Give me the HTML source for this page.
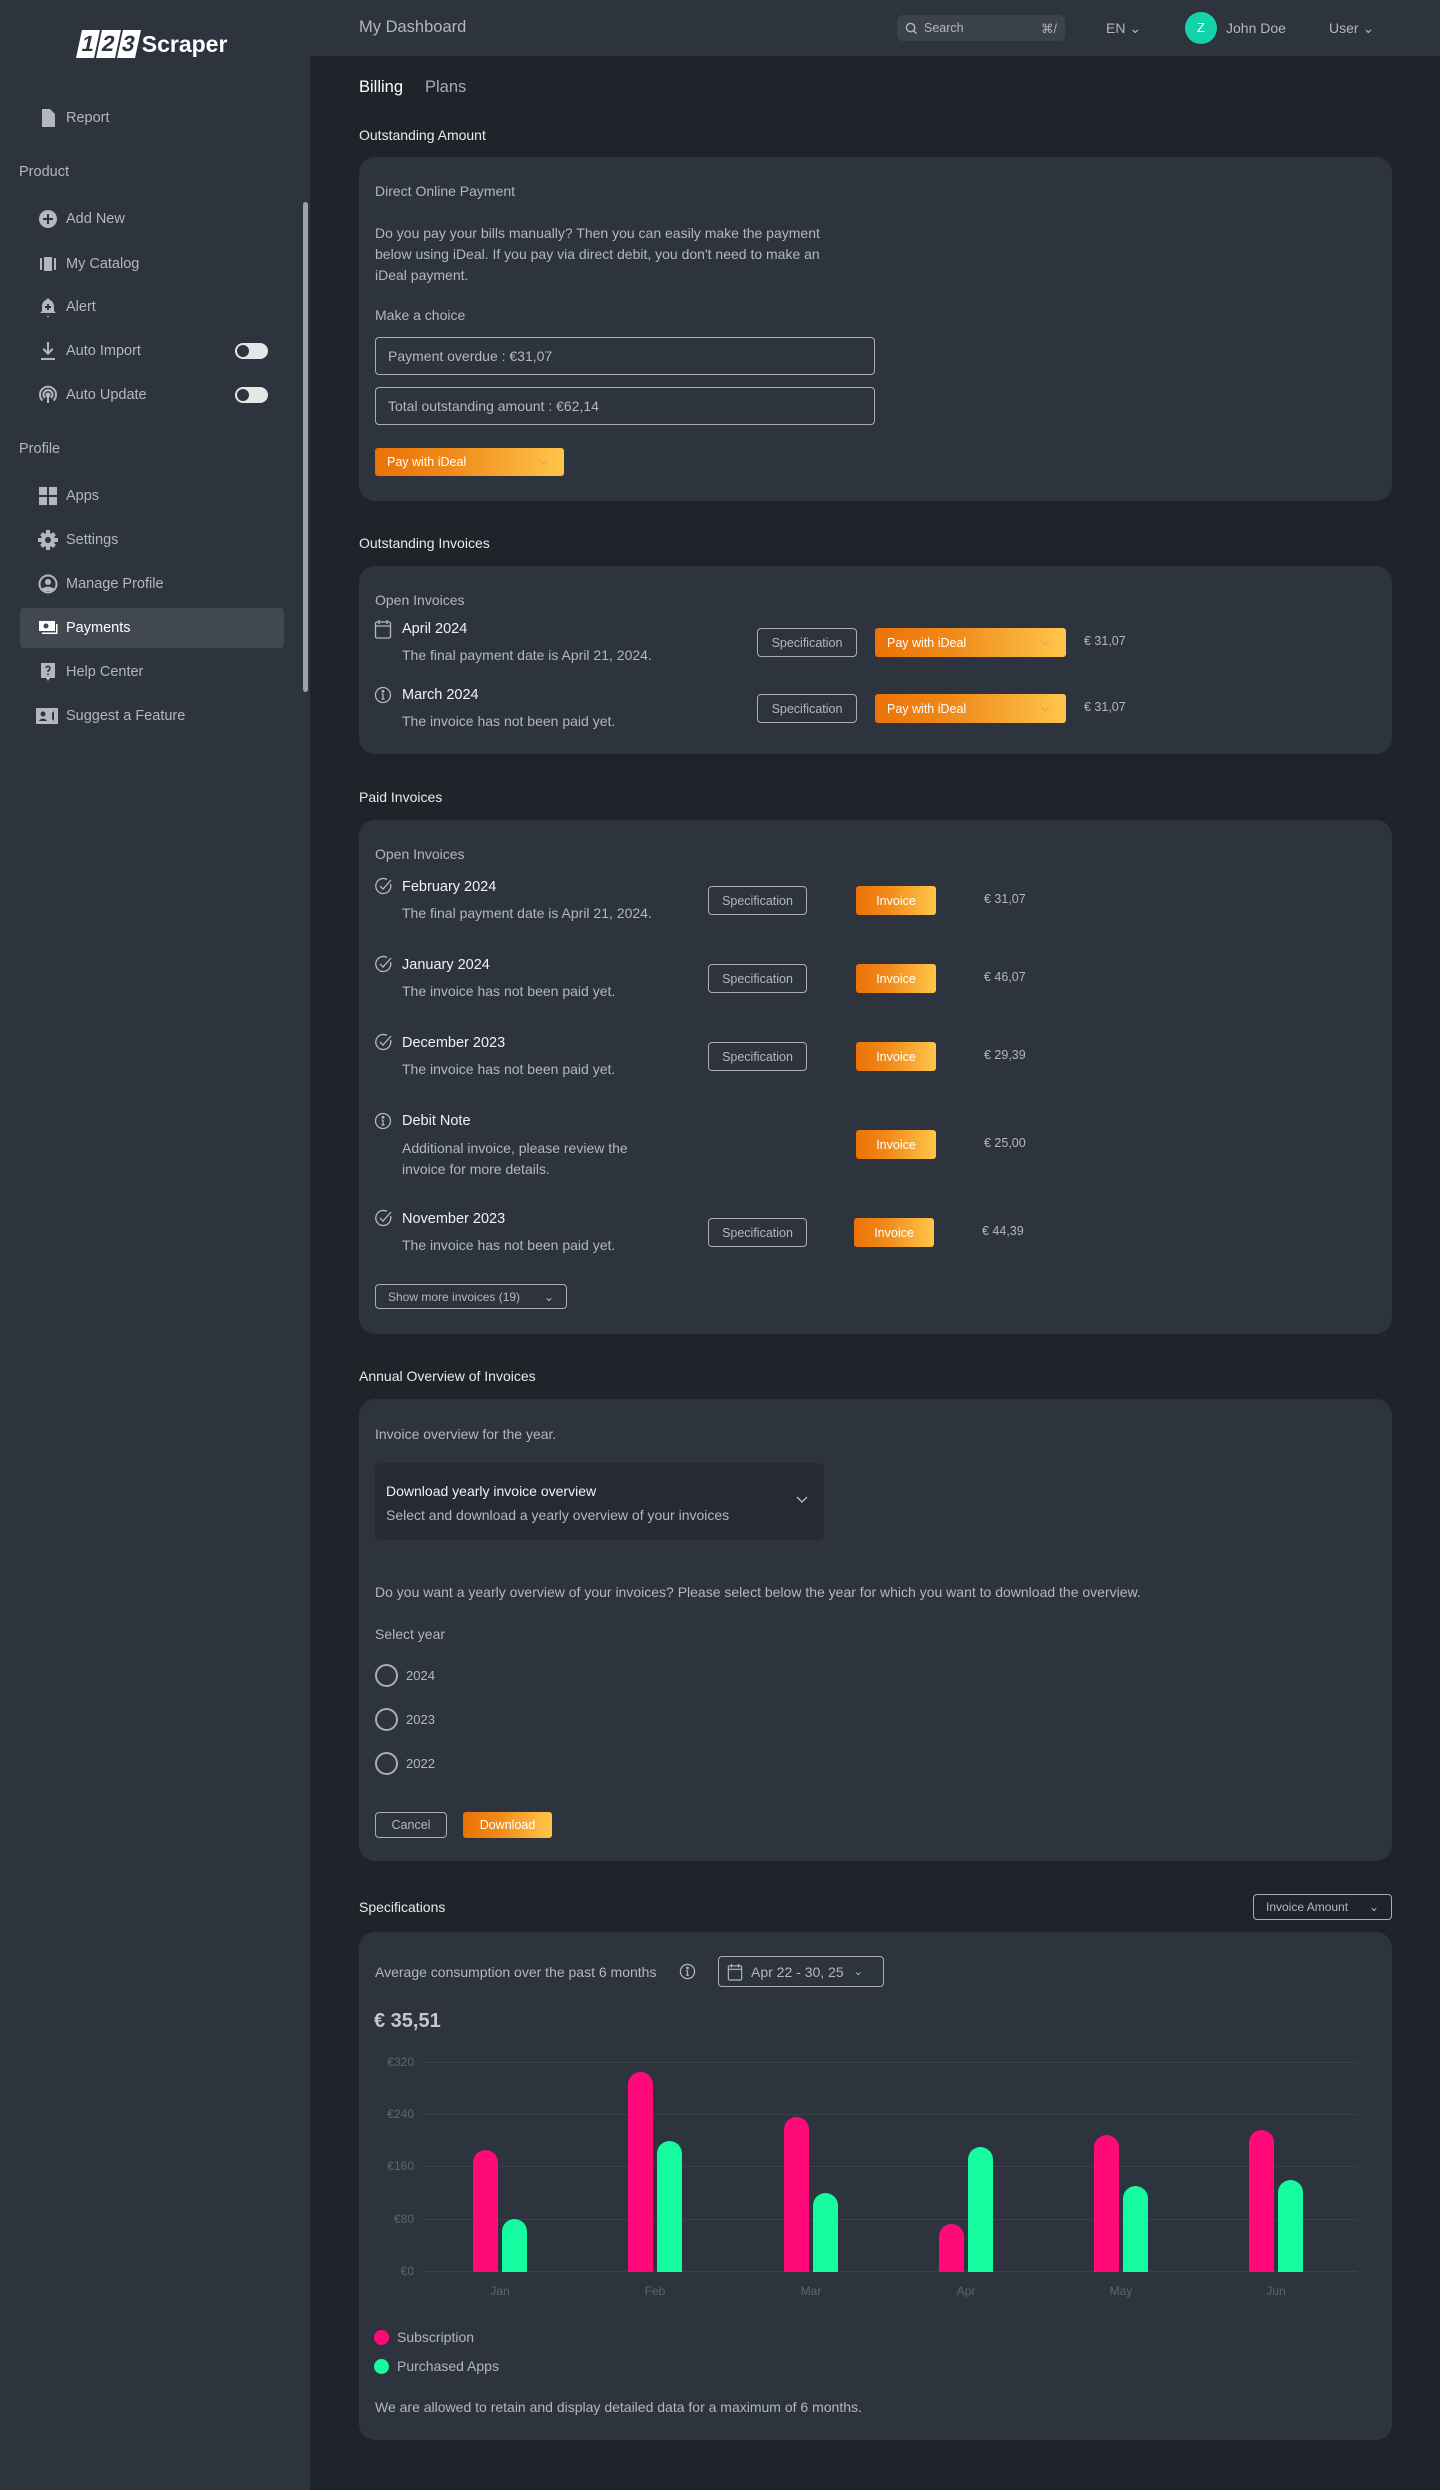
<!DOCTYPE html>
<html><head><meta charset="utf-8">
<style>
*{box-sizing:border-box;margin:0;padding:0}
body{width:1440px;height:2490px;background:#1f242b;font-family:"Liberation Sans",sans-serif;color:#b8bcc3;position:relative;overflow:hidden}
.a{position:absolute;white-space:nowrap}
.side{position:absolute;left:0;top:0;width:310px;height:2490px;background:#2d343e}
.hdr{position:absolute;left:310px;top:0;width:1130px;height:56px;background:#2d343e}
.nav{position:absolute;left:38px;font-size:14.5px;color:#b3b7be;display:flex;align-items:center;gap:8px}
.nav svg{width:20px;height:20px;fill:#b3b7be}
.sec{position:absolute;left:19px;font-size:14.5px;color:#b3b7be}
.tog{position:absolute;left:235px;width:33px;height:16px;border-radius:8px;background:#e6e6e6}
.tog:after{content:"";position:absolute;left:2px;top:2px;width:12px;height:12px;border-radius:50%;background:#2d343e}
.card{position:absolute;left:359px;width:1033px;background:#2d343e;border-radius:16px}
.h{position:absolute;left:359px;font-size:14px;color:#e8eaed}
.t{position:absolute;font-size:14px;color:#b3b7be;white-space:nowrap}
.ti{position:absolute;font-size:14.5px;color:#f1f2f4;white-space:nowrap}
.ob{position:absolute;border:1.5px solid #a9adb4;border-radius:4px;color:#b3b7be;font-size:12.5px;display:flex;align-items:center;justify-content:center}
.gb{position:absolute;background:linear-gradient(90deg,#ec7205 0%,#f08a1a 40%,#ffc64a 100%);border-radius:3px;color:#fff;font-size:12.5px;display:flex;align-items:center}
.gb svg{margin-left:auto;margin-right:16px}
.price{position:absolute;font-size:12.5px;color:#b3b7be}
.bar{position:absolute;width:25px;border-radius:12.5px 12.5px 0 0}
.pk{background:#ff0a78}.gr{background:#14fba0}
.gl{position:absolute;left:422px;width:935px;height:1px;background:#3a414b}
.yl{position:absolute;width:50px;left:364px;text-align:right;font-size:12px;color:#5f656e}
.ml{position:absolute;font-size:12px;color:#5f656e;width:60px;text-align:center}
.rad{position:absolute;left:375px;width:23px;height:23px;border:2px solid #a9adb4;border-radius:50%}
</style></head><body>
<div class="side">
  <div class="a" style="left:79px;top:30px;display:flex;align-items:center;gap:4px">
    <div style="display:flex;transform:skewX(-12deg)"><span style="background:#fff;color:#2d343e;font-weight:bold;font-size:22px;padding:0 3px;margin-right:2px;line-height:28px">1</span><span style="background:#fff;color:#2d343e;font-weight:bold;font-size:22px;padding:0 3px;margin-right:2px;line-height:28px">2</span><span style="background:#fff;color:#2d343e;font-weight:bold;font-size:22px;padding:0 3px;line-height:28px">3</span></div>
    <span style="color:#fff;font-weight:bold;font-size:23px">Scraper</span>
  </div>
  <div class="nav" style="top:108px"><svg viewBox="0 0 20 20"><path d="M4 1h8l5 5v13H4z M7 11h7v1.5H7z M7 14h7v1.5H7z"/></svg>Report</div>
  <div class="sec" style="top:164px">Product</div>
  <div class="nav" style="top:209px"><svg viewBox="0 0 20 20"><circle cx="10" cy="10" r="9"/><path d="M9 5h2v4h4v2h-4v4H9v-4H5V9h4z" fill="#2d343e"/></svg>Add New</div>
  <div class="nav" style="top:254px"><svg viewBox="0 0 20 20"><path d="M2 4h2v12H2z M6 3h8v14H6z M16 4h2v12h-2z"/></svg>My Catalog</div>
  <div class="nav" style="top:297px"><svg viewBox="0 0 20 20"><path d="M10 1l2 2c3 1 4 4 4 7v4l2 2H2l2-2v-4c0-3 1-6 4-7z M9 19h2v1H9z"/><path d="M9 7h2v2h2v2h-2v2H9v-2H7V9h2z" fill="#2d343e"/></svg>Alert</div>
  <div class="nav" style="top:341px"><svg viewBox="0 0 20 20"><path d="M9 1h2v9l3-3 1.5 1.5L10 14 4.5 8.5 6 7l3 3z M3 17h14v2H3z"/></svg>Auto Import</div>
  <div class="tog" style="top:343px"></div>
  <div class="nav" style="top:385px"><svg viewBox="0 0 20 20" style="fill:none" stroke="#b3b7be" stroke-width="2"><path d="M4.5 15.5A8 8 0 1 1 15.5 15.5"/><path d="M7 13a4.5 4.5 0 1 1 6 0"/><circle cx="10" cy="10" r="1.5" fill="#b3b7be"/><path d="M10 11v7"/></svg>Auto Update</div>
  <div class="tog" style="top:387px"></div>
  <div class="sec" style="top:441px">Profile</div>
  <div class="nav" style="top:486px"><svg viewBox="0 0 20 20"><path d="M1 1h8v8H1z M11 1h8v8h-8z M1 11h8v8H1z M11 11h8v8h-8z"/></svg>Apps</div>
  <div class="nav" style="top:530px"><svg viewBox="0 0 20 20"><circle cx="10" cy="10" r="7"/><path d="M8 0h4v4H8z M8 16h4v4H8z M0 8h4v4H0z M16 8h4v4h-4z M2 5l3-3 3 3-3 3z M12 15l3-3 3 3-3 3z M15 2l3 3-3 3-3-3z M5 12l3 3-3 3-3-3z"/><circle cx="10" cy="10" r="3" fill="#2d343e"/></svg>Settings</div>
  <div class="nav" style="top:574px"><svg viewBox="0 0 20 20"><circle cx="10" cy="10" r="9.5"/><circle cx="10" cy="10" r="7.5" fill="#2d343e"/><circle cx="10" cy="8" r="3"/><path d="M4 15c2-3 10-3 12 0l-2 2H6z"/></svg>Manage Profile</div>
  <div style="position:absolute;left:20px;top:608px;width:264px;height:40px;background:#414852;border-radius:4px"></div>
  <div class="nav" style="top:618px;color:#fff"><svg viewBox="0 0 20 20" style="fill:#fff"><path d="M1 3h16v10H1z"/><circle cx="8" cy="8" r="2.5" fill="#414852"/><path d="M18 6h1.5v10H4v-1.5h14z"/></svg>Payments</div>
  <div class="nav" style="top:662px"><svg viewBox="0 0 20 20"><path d="M3 1h14v15h-5l-2 3-2-3H3z"/><path d="M8 6a2 2 0 1 1 3 2c-1 .5-1 1-1 2" stroke="#2d343e" stroke-width="1.6" fill="none"/><rect x="9.2" y="11.5" width="1.6" height="1.6" fill="#2d343e"/></svg>Help Center</div>
  <div class="nav" style="top:706px;left:36px"><svg viewBox="0 0 22 20" style="width:22px"><path d="M0 2h22v16H0z"/><circle cx="7" cy="8" r="2.5" fill="#2d343e"/><path d="M3 15c1-3 7-3 8 0z M16 7l2-2v10l-2-2z" fill="#2d343e"/></svg>Suggest a Feature</div>
  <div style="position:absolute;left:303px;top:202px;width:5px;height:490px;background:#9fa3a9;border-radius:3px"></div>
</div>
<div class="hdr">
  <div class="a" style="left:49px;top:18px;font-size:16.5px;color:#b3b7be">My Dashboard</div>
  <div class="a" style="left:587px;top:15px;width:168px;height:26px;background:#3b424c;border-radius:6px;font-size:12.5px;color:#b3b7be;display:flex;align-items:center;padding:0 8px">
    <svg width="13" height="13" viewBox="0 0 14 14" fill="none" stroke="#b3b7be" stroke-width="1.5"><circle cx="6" cy="6" r="4.5"/><path d="M9.5 9.5l3 3"/></svg><span style="margin-left:6px">Search</span><span style="margin-left:auto">⌘/</span></div>
  <div class="a" style="left:796px;top:20px;font-size:14px;color:#b3b7be">EN ⌄</div>
  <div class="a" style="left:875px;top:12px;width:32px;height:32px;border-radius:50%;background:#14d3aa;color:#fff;font-size:13px;text-align:center;line-height:32px">Z</div>
  <div class="a" style="left:916px;top:20px;font-size:14px;color:#b3b7be">John Doe</div>
  <div class="a" style="left:1019px;top:20px;font-size:14px;color:#b3b7be">User ⌄</div>
</div>

<div class="a" style="left:359px;top:78px;font-size:16.5px;color:#fff">Billing</div>
<div class="a" style="left:425px;top:78px;font-size:16.5px;color:#a8acb3">Plans</div>

<div class="h" style="top:127px">Outstanding Amount</div>
<div class="card" style="top:157px;height:344px"></div>
<div class="t" style="left:375px;top:183px">Direct Online Payment</div>
<div class="t" style="left:375px;top:223px;line-height:21px">Do you pay your bills manually? Then you can easily make the payment<br>below using iDeal. If you pay via direct debit, you don't need to make an<br>iDeal payment.</div>
<div class="t" style="left:375px;top:307px">Make a choice</div>
<div class="ob" style="left:375px;top:337px;width:500px;height:38px;justify-content:flex-start;padding-left:12px;font-size:14px">Payment overdue : €31,07</div>
<div class="ob" style="left:375px;top:387px;width:500px;height:38px;justify-content:flex-start;padding-left:12px;font-size:14px">Total outstanding amount : €62,14</div>
<div class="gb" style="left:375px;top:448px;width:189px;height:28px;padding-left:12px">Pay with iDeal<svg width="10" height="6" viewBox="0 0 10 6" fill="none" stroke="#e8a26a" stroke-width="1.2"><path d="M1 1l4 4 4-4"/></svg></div>

<div class="h" style="top:535px">Outstanding Invoices</div>
<div class="card" style="top:566px;height:188px"></div>
<div class="t" style="left:375px;top:592px">Open Invoices</div>
<svg class="a" style="left:374px;top:619px" width="18" height="20" viewBox="0 0 18 20" fill="none" stroke="#b3b7be" stroke-width="1.3"><rect x="1.5" y="3" width="15" height="16" rx="1.5"/><path d="M1.5 7h15 M5 1v4 M13 1v4"/></svg>
<div class="ti" style="left:402px;top:621px">April 2024</div>
<div class="t" style="left:402px;top:647px">The final payment date is April 21, 2024.</div>
<div class="ob" style="left:757px;top:628px;width:100px;height:29px">Specification</div>
<div class="gb" style="left:875px;top:628px;width:191px;height:29px;padding-left:12px">Pay with iDeal<svg width="10" height="6" viewBox="0 0 10 6" fill="none" stroke="#e8a26a" stroke-width="1.2"><path d="M1 1l4 4 4-4"/></svg></div>
<div class="price" style="left:1084px;top:634px">€ 31,07</div>
<svg class="a" style="left:374px;top:686px" width="18" height="18" viewBox="0 0 18 18" fill="none" stroke="#b3b7be" stroke-width="1.3"><circle cx="9" cy="9" r="7.5"/><path d="M9 8v5 M7.5 13h3 M7.5 8H9"/><circle cx="9" cy="5.3" r=".8" fill="#b3b7be"/></svg>
<div class="ti" style="left:402px;top:687px">March 2024</div>
<div class="t" style="left:402px;top:713px">The invoice has not been paid yet.</div>
<div class="ob" style="left:757px;top:694px;width:100px;height:29px">Specification</div>
<div class="gb" style="left:875px;top:694px;width:191px;height:29px;padding-left:12px">Pay with iDeal<svg width="10" height="6" viewBox="0 0 10 6" fill="none" stroke="#e8a26a" stroke-width="1.2"><path d="M1 1l4 4 4-4"/></svg></div>
<div class="price" style="left:1084px;top:700px">€ 31,07</div>

<div class="h" style="top:789px">Paid Invoices</div>
<div class="card" style="top:820px;height:514px"></div>
<div class="t" style="left:375px;top:846px">Open Invoices</div>

<svg class="a" style="left:374px;top:877px" width="19" height="19" viewBox="0 0 19 19" fill="none" stroke="#b3b7be" stroke-width="1.3"><path d="M16.5 7A7.5 7.5 0 1 1 13 2.5"/><path d="M6 9l3 3 8-9"/></svg>
<div class="ti" style="left:402px;top:879px">February 2024</div>
<div class="t" style="left:402px;top:905px">The final payment date is April 21, 2024.</div>
<div class="ob" style="left:708px;top:886px;width:99px;height:29px">Specification</div>
<div class="gb" style="left:856px;top:886px;width:80px;height:29px;justify-content:center">Invoice</div>
<div class="price" style="left:984px;top:892px">€ 31,07</div>

<svg class="a" style="left:374px;top:955px" width="19" height="19" viewBox="0 0 19 19" fill="none" stroke="#b3b7be" stroke-width="1.3"><path d="M16.5 7A7.5 7.5 0 1 1 13 2.5"/><path d="M6 9l3 3 8-9"/></svg>
<div class="ti" style="left:402px;top:957px">January 2024</div>
<div class="t" style="left:402px;top:983px">The invoice has not been paid yet.</div>
<div class="ob" style="left:708px;top:964px;width:99px;height:29px">Specification</div>
<div class="gb" style="left:856px;top:964px;width:80px;height:29px;justify-content:center">Invoice</div>
<div class="price" style="left:984px;top:970px">€ 46,07</div>

<svg class="a" style="left:374px;top:1033px" width="19" height="19" viewBox="0 0 19 19" fill="none" stroke="#b3b7be" stroke-width="1.3"><path d="M16.5 7A7.5 7.5 0 1 1 13 2.5"/><path d="M6 9l3 3 8-9"/></svg>
<div class="ti" style="left:402px;top:1035px">December 2023</div>
<div class="t" style="left:402px;top:1061px">The invoice has not been paid yet.</div>
<div class="ob" style="left:708px;top:1042px;width:99px;height:29px">Specification</div>
<div class="gb" style="left:856px;top:1042px;width:80px;height:29px;justify-content:center">Invoice</div>
<div class="price" style="left:984px;top:1048px">€ 29,39</div>

<svg class="a" style="left:374px;top:1112px" width="18" height="18" viewBox="0 0 18 18" fill="none" stroke="#b3b7be" stroke-width="1.3"><circle cx="9" cy="9" r="7.5"/><path d="M9 8v5 M7.5 13h3 M7.5 8H9"/><circle cx="9" cy="5.3" r=".8" fill="#b3b7be"/></svg>
<div class="ti" style="left:402px;top:1113px">Debit Note</div>
<div class="t" style="left:402px;top:1138px;line-height:21px">Additional invoice, please review the<br>invoice for more details.</div>
<div class="gb" style="left:856px;top:1130px;width:80px;height:29px;justify-content:center">Invoice</div>
<div class="price" style="left:984px;top:1136px">€ 25,00</div>

<svg class="a" style="left:374px;top:1209px" width="19" height="19" viewBox="0 0 19 19" fill="none" stroke="#b3b7be" stroke-width="1.3"><path d="M16.5 7A7.5 7.5 0 1 1 13 2.5"/><path d="M6 9l3 3 8-9"/></svg>
<div class="ti" style="left:402px;top:1211px">November 2023</div>
<div class="t" style="left:402px;top:1237px">The invoice has not been paid yet.</div>
<div class="ob" style="left:708px;top:1218px;width:99px;height:29px">Specification</div>
<div class="gb" style="left:854px;top:1218px;width:80px;height:29px;justify-content:center">Invoice</div>
<div class="price" style="left:982px;top:1224px">€ 44,39</div>

<div class="ob" style="left:375px;top:1284px;width:192px;height:25px;font-size:12px;justify-content:flex-start;padding-left:12px">Show more invoices (19)<span style="margin-left:auto;margin-right:12px">⌄</span></div>

<div class="h" style="top:1368px">Annual Overview of Invoices</div>
<div class="card" style="top:1399px;height:462px"></div>
<div class="t" style="left:375px;top:1426px">Invoice overview for the year.</div>
<div style="position:absolute;left:375px;top:1463px;width:449px;height:77px;background:#262b33;border-radius:6px"></div>
<div class="ti" style="left:386px;top:1483px;font-size:14px">Download yearly invoice overview</div>
<div class="t" style="left:386px;top:1507px">Select and download a yearly overview of your invoices</div>
<svg class="a" style="left:796px;top:1496px" width="12" height="8" viewBox="0 0 12 8" fill="none" stroke="#b3b7be" stroke-width="1.4"><path d="M1 1l5 5 5-5"/></svg>
<div class="t" style="left:375px;top:1584px">Do you want a yearly overview of your invoices? Please select below the year for which you want to download the overview.</div>
<div class="t" style="left:375px;top:1626px">Select year</div>
<div class="rad" style="top:1664px"></div><div class="t" style="left:406px;top:1668px;font-size:13px">2024</div>
<div class="rad" style="top:1708px"></div><div class="t" style="left:406px;top:1712px;font-size:13px">2023</div>
<div class="rad" style="top:1752px"></div><div class="t" style="left:406px;top:1756px;font-size:13px">2022</div>
<div class="ob" style="left:375px;top:1812px;width:72px;height:26px">Cancel</div>
<div class="gb" style="left:463px;top:1812px;width:89px;height:26px;justify-content:center">Download</div>

<div class="h" style="top:1899px">Specifications</div>
<div class="ob" style="left:1253px;top:1894px;width:139px;height:26px;font-size:12px;justify-content:flex-start;padding-left:12px">Invoice Amount<span style="margin-left:auto;margin-right:12px">⌄</span></div>
<div class="card" style="top:1932px;height:508px"></div>
<div class="t" style="left:375px;top:1964px">Average consumption over the past 6 months</div>
<svg class="a" style="left:679px;top:1963px" width="17" height="17" viewBox="0 0 18 18" fill="none" stroke="#b3b7be" stroke-width="1.3"><circle cx="9" cy="9" r="7.5"/><path d="M9 8v5 M7.5 13h3 M7.5 8H9"/><circle cx="9" cy="5.3" r=".8" fill="#b3b7be"/></svg>
<div class="ob" style="left:718px;top:1956px;width:166px;height:31px;font-size:14px;justify-content:flex-start;padding-left:8px"><svg width="16" height="18" viewBox="0 0 18 20" fill="none" stroke="#b3b7be" stroke-width="1.3"><rect x="1.5" y="3" width="15" height="16" rx="1.5"/><path d="M1.5 7h15 M5 1v4 M13 1v4"/></svg><span style="margin-left:8px">Apr 22 - 30, 25</span><span style="margin-left:10px;font-size:11px">⌄</span></div>
<div class="a" style="left:374px;top:2010px;font-size:20px;color:#c4c7cc;font-weight:bold">€ 35,51</div>

<div class="gl" style="top:2062px"></div><div class="yl" style="top:2055px">€320</div>
<div class="gl" style="top:2114px"></div><div class="yl" style="top:2107px">€240</div>
<div class="gl" style="top:2166px"></div><div class="yl" style="top:2159px">€160</div>
<div class="gl" style="top:2219px"></div><div class="yl" style="top:2212px">€80</div>
<div class="gl" style="top:2271px"></div><div class="yl" style="top:2264px">€0</div>

<div class="bar pk" style="left:473px;top:2150px;height:122px"></div><div class="bar gr" style="left:502px;top:2219px;height:53px"></div>
<div class="bar pk" style="left:628px;top:2072px;height:200px"></div><div class="bar gr" style="left:657px;top:2141px;height:131px"></div>
<div class="bar pk" style="left:784px;top:2117px;height:155px"></div><div class="bar gr" style="left:813px;top:2193px;height:79px"></div>
<div class="bar pk" style="left:939px;top:2224px;height:48px"></div><div class="bar gr" style="left:968px;top:2147px;height:125px"></div>
<div class="bar pk" style="left:1094px;top:2135px;height:137px"></div><div class="bar gr" style="left:1123px;top:2186px;height:86px"></div>
<div class="bar pk" style="left:1249px;top:2130px;height:142px"></div><div class="bar gr" style="left:1278px;top:2180px;height:92px"></div>

<div class="ml" style="left:470px;top:2284px">Jan</div>
<div class="ml" style="left:625px;top:2284px">Feb</div>
<div class="ml" style="left:781px;top:2284px">Mar</div>
<div class="ml" style="left:936px;top:2284px">Apr</div>
<div class="ml" style="left:1091px;top:2284px">May</div>
<div class="ml" style="left:1246px;top:2284px">Jun</div>

<div class="a" style="left:374px;top:2330px;width:15px;height:15px;border-radius:50%;background:#ff0a78"></div>
<div class="t" style="left:397px;top:2329px">Subscription</div>
<div class="a" style="left:374px;top:2359px;width:15px;height:15px;border-radius:50%;background:#14fba0"></div>
<div class="t" style="left:397px;top:2358px">Purchased Apps</div>
<div class="t" style="left:375px;top:2399px">We are allowed to retain and display detailed data for a maximum of 6 months.</div>
</body></html>
